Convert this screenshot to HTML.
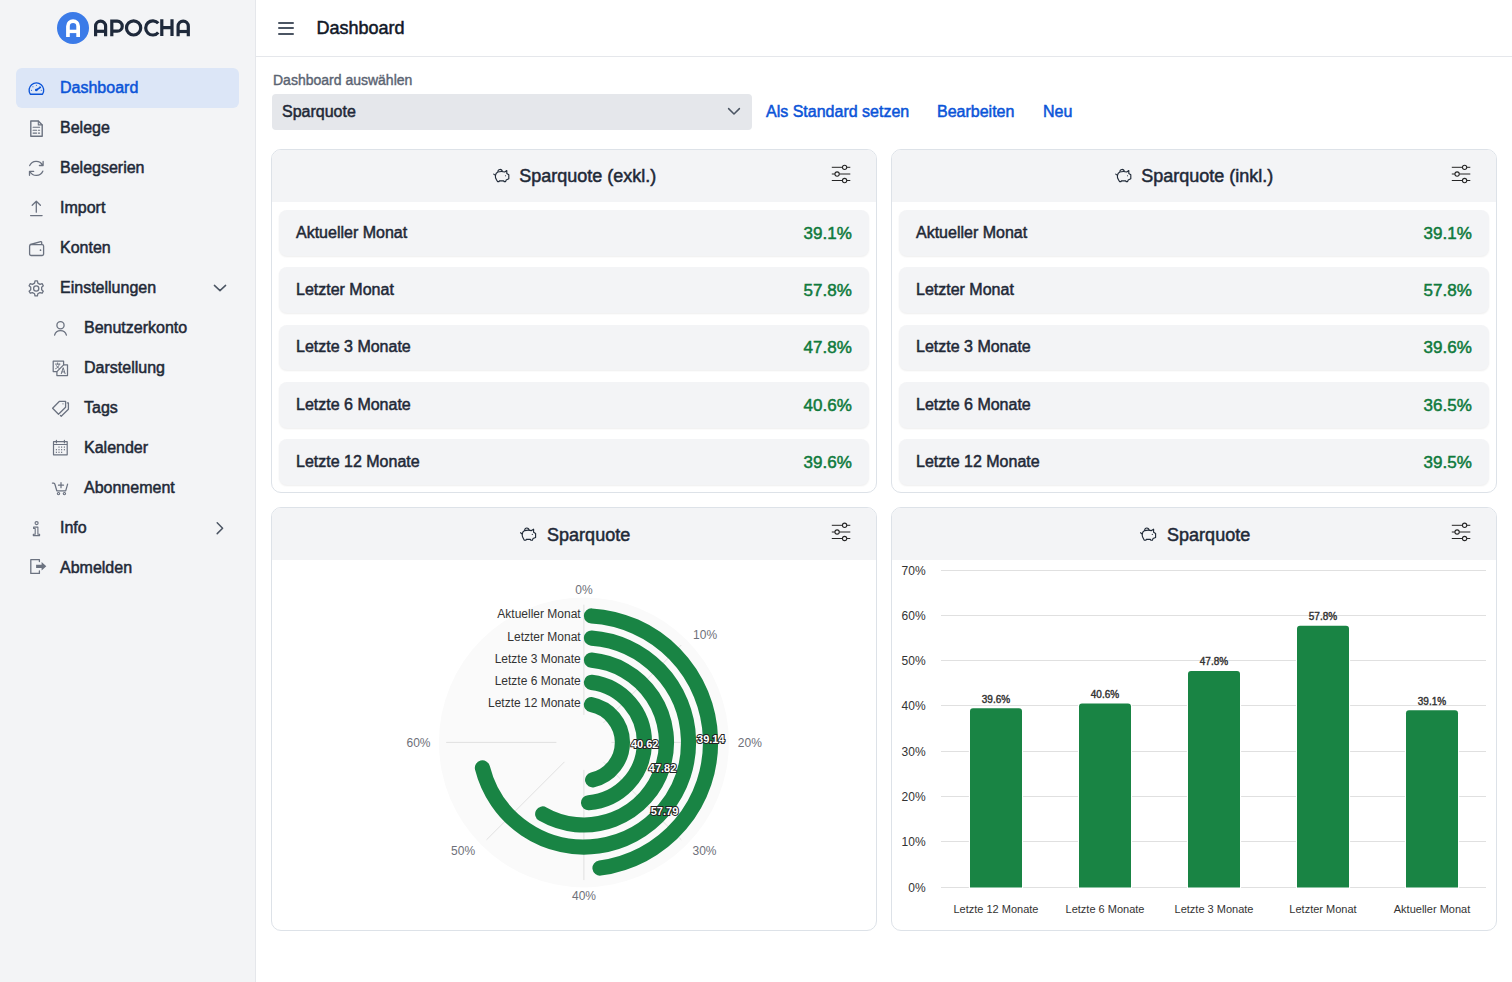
<!DOCTYPE html><html><head><meta charset="utf-8"><title>Dashboard</title><style>
*{box-sizing:border-box;margin:0;padding:0}
html,body{width:1512px;height:982px;overflow:hidden;background:#fff;font-family:"Liberation Sans",sans-serif}
.t{position:absolute;white-space:nowrap}
.abs{position:absolute}
svg.full{position:absolute;left:0;top:0;overflow:visible}
</style></head><body>
<div class="abs" style="left:0;top:0;width:255px;height:982px;background:#f3f4f6"></div>
<div class="abs" style="left:255px;top:0;width:1px;height:982px;background:#e5e7eb"></div>
<div class="abs" style="left:16px;top:68px;width:223px;height:40px;border-radius:6px;background:#dce6f7"></div>
<div class="abs" style="left:256px;top:56px;width:1256px;height:1px;background:#e5e7eb"></div>
<div class="abs" style="left:278px;top:21.8px;width:16px;height:2px;border-radius:1px;background:#4b5563"></div><div class="abs" style="left:278px;top:27.3px;width:16px;height:2px;border-radius:1px;background:#4b5563"></div><div class="abs" style="left:278px;top:32.8px;width:16px;height:2px;border-radius:1px;background:#4b5563"></div><div class="abs" style="left:272px;top:94px;width:480px;height:36px;border-radius:4px;background:#e5e7eb"></div>
<div class="abs" style="left:271px;top:149px;width:606px;height:344px;border:1px solid #dde2e8;border-radius:10px;overflow:hidden;background:#fff"><div class="abs" style="left:0;top:0;width:604px;height:52px;background:#f3f4f6"></div></div>
<div class="abs" style="left:279px;top:210.00px;width:590px;height:45.5px;border-radius:8px;background:#f3f4f6;box-shadow:0 1px 2px rgba(0,0,0,0.07)"></div>
<div class="abs" style="left:279px;top:267.00px;width:590px;height:45.5px;border-radius:8px;background:#f3f4f6;box-shadow:0 1px 2px rgba(0,0,0,0.07)"></div>
<div class="abs" style="left:279px;top:324.50px;width:590px;height:45.5px;border-radius:8px;background:#f3f4f6;box-shadow:0 1px 2px rgba(0,0,0,0.07)"></div>
<div class="abs" style="left:279px;top:382.00px;width:590px;height:45.5px;border-radius:8px;background:#f3f4f6;box-shadow:0 1px 2px rgba(0,0,0,0.07)"></div>
<div class="abs" style="left:279px;top:439.00px;width:590px;height:45.5px;border-radius:8px;background:#f3f4f6;box-shadow:0 1px 2px rgba(0,0,0,0.07)"></div>
<div class="abs" style="left:891px;top:149px;width:606px;height:344px;border:1px solid #dde2e8;border-radius:10px;overflow:hidden;background:#fff"><div class="abs" style="left:0;top:0;width:604px;height:52px;background:#f3f4f6"></div></div>
<div class="abs" style="left:899px;top:210.00px;width:590px;height:45.5px;border-radius:8px;background:#f3f4f6;box-shadow:0 1px 2px rgba(0,0,0,0.07)"></div>
<div class="abs" style="left:899px;top:267.00px;width:590px;height:45.5px;border-radius:8px;background:#f3f4f6;box-shadow:0 1px 2px rgba(0,0,0,0.07)"></div>
<div class="abs" style="left:899px;top:324.50px;width:590px;height:45.5px;border-radius:8px;background:#f3f4f6;box-shadow:0 1px 2px rgba(0,0,0,0.07)"></div>
<div class="abs" style="left:899px;top:382.00px;width:590px;height:45.5px;border-radius:8px;background:#f3f4f6;box-shadow:0 1px 2px rgba(0,0,0,0.07)"></div>
<div class="abs" style="left:899px;top:439.00px;width:590px;height:45.5px;border-radius:8px;background:#f3f4f6;box-shadow:0 1px 2px rgba(0,0,0,0.07)"></div>
<div class="abs" style="left:271px;top:507px;width:606px;height:424px;border:1px solid #dde2e8;border-radius:10px;overflow:hidden;background:#fff"><div class="abs" style="left:0;top:0;width:604px;height:52px;background:#f3f4f6"></div></div>
<div class="abs" style="left:891px;top:507px;width:606px;height:424px;border:1px solid #dde2e8;border-radius:10px;overflow:hidden;background:#fff"><div class="abs" style="left:0;top:0;width:604px;height:52px;background:#f3f4f6"></div></div>
<svg class="full" width="1512" height="982" viewBox="0 0 1512 982"><circle cx="73" cy="28" r="16" fill="#3b7be8"/><path d="M67.95 36.9 V26.25 a5.1 5.1 0 0 1 10.2 0 V36.9" fill="none" stroke="#fff" stroke-width="3.7"/><path d="M67.95 31.4 H78.15" stroke="#fff" stroke-width="3.4"/><path d="M95.60 36.2 V26.10 a5.00 5.00 0 0 1 10.00 0 V36.2" fill="none" stroke="#1e293b" stroke-width="3.2"/><path d="M95.60 31.3 H105.60" stroke="#1e293b" stroke-width="3.2"/><path d="M111.80 36.2 V21.10 H117.2 a5.05 5.05 0 0 1 0 10.10 H111.80" fill="none" stroke="#1e293b" stroke-width="3.2"/><circle cx="133.6" cy="27.9" r="7.10" fill="none" stroke="#1e293b" stroke-width="3.2"/><path d="M158.24 23.34 A7.10 7.10 0 1 0 158.24 32.46" fill="none" stroke="#1e293b" stroke-width="3.2"/><path d="M161.80 19.2 V36 M172.00 19.2 V36 M161.80 27.65 H172.00" fill="none" stroke="#1e293b" stroke-width="3.2"/><path d="M178.10 36.2 V26.20 a5.10 5.10 0 0 1 10.20 0 V36.2" fill="none" stroke="#1e293b" stroke-width="3.2"/><path d="M178.10 31.5 H188.30" stroke="#1e293b" stroke-width="3.2"/><path d="M30.3 94.2 A7.3 7.3 0 1 1 42.5 94.2 Z" fill="none" stroke="#0b54d8" stroke-width="1.35" stroke-linecap="round" stroke-linejoin="round" /><path d="M36.3 90 L40.4 87.3" fill="none" stroke="#0b54d8" stroke-width="1.5" stroke-linecap="round" stroke-linejoin="round" /><circle cx="36.3" cy="90" r="1.3" fill="#0b54d8"/><circle cx="31.50" cy="90.20" r="0.55" fill="#0b54d8"/><circle cx="32.94" cy="86.74" r="0.55" fill="#0b54d8"/><circle cx="36.40" cy="85.30" r="0.55" fill="#0b54d8"/><circle cx="39.86" cy="86.74" r="0.55" fill="#0b54d8"/><circle cx="41.30" cy="90.20" r="0.55" fill="#0b54d8"/><path d="M30.8 121 H38.3 L42.2 124.9 V136.2 H30.8 Z" fill="none" stroke="#6b7280" stroke-width="1.4" stroke-linecap="round" stroke-linejoin="round" /><path d="M38.3 121 V124.9 H42.2" fill="none" stroke="#6b7280" stroke-width="1.1" stroke-linecap="round" stroke-linejoin="round" /><path d="M33.1 127.3 H39.6 M33.1 130.2 H36.6 M38.4 130.2 H39.6 M33.1 133.1 H36.6 M38.4 133.1 H39.6" fill="none" stroke="#6b7280" stroke-width="1.1" stroke-linecap="round" stroke-linejoin="round" /><path d="M29.7 165.6 A7.1 7.1 0 0 1 42.5 165.2 M43.1 161.5 V165.5 H39.4" fill="none" stroke="#6b7280" stroke-width="1.3" stroke-linecap="round" stroke-linejoin="round" /><path d="M42.8 171.2 A7.1 7.1 0 0 1 30.1 171.7 M29.5 175.3 V171.3 H33.7" fill="none" stroke="#6b7280" stroke-width="1.3" stroke-linecap="round" stroke-linejoin="round" /><path d="M36.3 201.2 V212.2 M32.2 205.3 L36.3 201.2 L40.4 205.3 M30.6 215.6 H42.1" fill="none" stroke="#6b7280" stroke-width="1.3" stroke-linecap="round" stroke-linejoin="round" /><path d="M29.6 246 a1.4 1.4 0 0 1 1.4 -1.4 H42.2 a1.4 1.4 0 0 1 1.4 1.4 V254.1 a1.4 1.4 0 0 1 -1.4 1.4 H31 a1.4 1.4 0 0 1 -1.4 -1.4 Z" fill="none" stroke="#6b7280" stroke-width="1.3" stroke-linecap="round" stroke-linejoin="round" /><path d="M30.4 244.5 L40.7 241.6 a0.8 0.8 0 0 1 1 0.8 V244.4" fill="none" stroke="#6b7280" stroke-width="1.3" stroke-linecap="round" stroke-linejoin="round" /><circle cx="40.5" cy="250.2" r="0.85" fill="#6b7280"/><path d="M34.56 283.09 L35.01 280.94 L37.39 280.94 L37.84 283.09 L40.02 284.35 L42.11 283.67 L43.30 285.73 L41.66 287.19 L41.66 289.71 L43.30 291.17 L42.11 293.23 L40.02 292.55 L37.84 293.81 L37.39 295.96 L35.01 295.96 L34.56 293.81 L32.38 292.55 L30.29 293.23 L29.10 291.17 L30.74 289.71 L30.74 287.19 L29.10 285.73 L30.29 283.67 L32.38 284.35 Z" fill="none" stroke="#6b7280" stroke-width="1.3" stroke-linecap="round" stroke-linejoin="round" /><circle cx="36.2" cy="288.45" r="2.6" fill="none" stroke="#6b7280" stroke-width="1.3"/><circle cx="60.5" cy="325.3" r="3.6" fill="none" stroke="#6b7280" stroke-width="1.3"/><path d="M54.6 335.2 A6.1 6.1 0 0 1 66.4 335.2" fill="none" stroke="#6b7280" stroke-width="1.3" stroke-linecap="round" stroke-linejoin="round" /><path d="M53.2 361.2 H63.6 V364.9 L56.9 371.6 H53.2 Z" fill="none" stroke="#6b7280" stroke-width="1.25" stroke-linecap="round" stroke-linejoin="round" /><path d="M63.6 364.8 H67.5 V375.5 H56.9 V371.6" fill="none" stroke="#6b7280" stroke-width="1.25" stroke-linecap="round" stroke-linejoin="round" /><path d="M55.4 364.1 H60 M57.6 362.9 V364.1 M59.3 364.1 C58.9 366.4 57.6 367.9 55.6 368.7 M56.5 365.7 C57.1 366.9 58 367.9 59.2 368.5" fill="none" stroke="#6b7280" stroke-width="0.95" stroke-linecap="round" stroke-linejoin="round" /><path d="M61.3 373.7 L63.2 367.7 L65.1 373.7 M61.9 371.9 H64.5" fill="none" stroke="#6b7280" stroke-width="1.0" stroke-linecap="round" stroke-linejoin="round" /><path d="M52.6 408.3 L59.5 401.3 H65.6 V407.3 L58.5 414.2 Z" fill="none" stroke="#6b7280" stroke-width="1.3" stroke-linecap="round" stroke-linejoin="round" /><path d="M67.3 402.9 H68.4 V409.2 L61.2 416.2 L60.4 415.4" fill="none" stroke="#6b7280" stroke-width="1.3" stroke-linecap="round" stroke-linejoin="round" /><circle cx="63" cy="403.8" r="0.65" fill="#6b7280"/><path d="M53.5 441.7 H67.2 V454.8 H53.5 Z M53.5 444.5 H67.2 M56.4 440.3 V442.8 M64.4 440.3 V442.8" fill="none" stroke="#6b7280" stroke-width="1.2" stroke-linecap="round" stroke-linejoin="round" /><rect x="58.40" y="446.50" width="1.2" height="1.2" fill="#6b7280"/><rect x="61.00" y="446.50" width="1.2" height="1.2" fill="#6b7280"/><rect x="63.80" y="446.50" width="1.2" height="1.2" fill="#6b7280"/><rect x="55.80" y="449.10" width="1.2" height="1.2" fill="#6b7280"/><rect x="58.40" y="449.10" width="1.2" height="1.2" fill="#6b7280"/><rect x="61.00" y="449.10" width="1.2" height="1.2" fill="#6b7280"/><rect x="63.80" y="449.10" width="1.2" height="1.2" fill="#6b7280"/><rect x="55.80" y="451.70" width="1.2" height="1.2" fill="#6b7280"/><rect x="58.40" y="451.70" width="1.2" height="1.2" fill="#6b7280"/><rect x="61.00" y="451.70" width="1.2" height="1.2" fill="#6b7280"/><path d="M52.4 483.1 H53.7 Q54.6 483.3 54.9 484.3 L56.8 490.8 H65.7 L67.6 484.2" fill="none" stroke="#6b7280" stroke-width="1.25" stroke-linecap="round" stroke-linejoin="round" /><path d="M61 482.7 V487.7 M58.5 485.2 H63.5" fill="none" stroke="#6b7280" stroke-width="1.25" stroke-linecap="round" stroke-linejoin="round" /><circle cx="58.5" cy="493.6" r="1.15" fill="none" stroke="#6b7280" stroke-width="1.15"/><circle cx="64.4" cy="493.6" r="1.15" fill="none" stroke="#6b7280" stroke-width="1.15"/><circle cx="36.6" cy="523.1" r="1.55" fill="none" stroke="#6b7280" stroke-width="1.15"/><path d="M33.6 527.1 H37.9 V534.2 H39.6 V535.6 H33.3 V534.2 H35.2 V528.5 H33.6 Z" fill="none" stroke="#6b7280" stroke-width="1.1" stroke-linecap="round" stroke-linejoin="round" /><path d="M39.4 561.6 V559.7 H30.8 V573.4 H39.4 V571" fill="none" stroke="#6b7280" stroke-width="1.3" stroke-linecap="round" stroke-linejoin="round" /><path d="M36.1 564.7 H41.6 V562 L46.3 566.3 L41.6 570.4 V568 H36.1 Z" fill="#6b7280"/><path d="M214.4 285.4 L220 290.6 L225.6 285.4" fill="none" stroke="#4b5563" stroke-width="1.5" stroke-linecap="round" stroke-linejoin="round" /><path d="M217.2 522.8 L222.6 528.2 L217.2 533.6" fill="none" stroke="#4b5563" stroke-width="1.5" stroke-linecap="round" stroke-linejoin="round" /><path d="M728.6 108.6 L734 114 L739.4 108.6" fill="none" stroke="#4b5563" stroke-width="1.5" stroke-linecap="round" stroke-linejoin="round" /><g transform="translate(489.2 163.4)"><path d="M8.6 8.6 C10.5 8.1 13.5 8.0 15.5 8.6 L17.6 7.2 L17.6 10.2 L19.6 11.4 L19.6 15.4 L17.0 16.6 L16.4 18.2 L14.8 18.2 L14.5 17.4 L10.2 17.4 L9.9 18.2 L8.3 18.2 L7.0 15.8 C6.3 14.8 6.1 13.5 6.2 12.2 C6.5 10.3 7.5 9.2 8.6 8.6 Z" fill="none" stroke="#1f2937" stroke-width="1.15" stroke-linejoin="round"/><path d="M6.3 12.0 L4.5 10.7" fill="none" stroke="#1f2937" stroke-width="1.1" stroke-linecap="round"/><path d="M8.7 8.4 C8.5 5.3 12.8 5.3 13.1 8.2" fill="none" stroke="#1f2937" stroke-width="1.15"/><circle cx="16.3" cy="12.4" r="0.55" fill="#1f2937"/></g><path d="M831.8 167.3 H842.5 M846.7 167.3 H850.3" stroke="#262626" stroke-width="1"/><circle cx="844.6" cy="167.3" r="2.15" fill="none" stroke="#262626" stroke-width="1.05"/><path d="M831.8 174.0 H835.0 M839.2 174.0 H850.3" stroke="#262626" stroke-width="1"/><circle cx="837.1" cy="174.0" r="2.15" fill="none" stroke="#262626" stroke-width="1.05"/><path d="M831.8 180.5 H842.5 M846.7 180.5 H850.3" stroke="#262626" stroke-width="1"/><circle cx="844.6" cy="180.5" r="2.15" fill="none" stroke="#262626" stroke-width="1.05"/><g transform="translate(1111.2 163.4)"><path d="M8.6 8.6 C10.5 8.1 13.5 8.0 15.5 8.6 L17.6 7.2 L17.6 10.2 L19.6 11.4 L19.6 15.4 L17.0 16.6 L16.4 18.2 L14.8 18.2 L14.5 17.4 L10.2 17.4 L9.9 18.2 L8.3 18.2 L7.0 15.8 C6.3 14.8 6.1 13.5 6.2 12.2 C6.5 10.3 7.5 9.2 8.6 8.6 Z" fill="none" stroke="#1f2937" stroke-width="1.15" stroke-linejoin="round"/><path d="M6.3 12.0 L4.5 10.7" fill="none" stroke="#1f2937" stroke-width="1.1" stroke-linecap="round"/><path d="M8.7 8.4 C8.5 5.3 12.8 5.3 13.1 8.2" fill="none" stroke="#1f2937" stroke-width="1.15"/><circle cx="16.3" cy="12.4" r="0.55" fill="#1f2937"/></g><path d="M1451.8 167.3 H1462.5 M1466.6999999999998 167.3 H1470.3" stroke="#262626" stroke-width="1"/><circle cx="1464.6" cy="167.3" r="2.15" fill="none" stroke="#262626" stroke-width="1.05"/><path d="M1451.8 174.0 H1455.0 M1459.1999999999998 174.0 H1470.3" stroke="#262626" stroke-width="1"/><circle cx="1457.1" cy="174.0" r="2.15" fill="none" stroke="#262626" stroke-width="1.05"/><path d="M1451.8 180.5 H1462.5 M1466.6999999999998 180.5 H1470.3" stroke="#262626" stroke-width="1"/><circle cx="1464.6" cy="180.5" r="2.15" fill="none" stroke="#262626" stroke-width="1.05"/><g transform="translate(516 522)"><path d="M8.6 8.6 C10.5 8.1 13.5 8.0 15.5 8.6 L17.6 7.2 L17.6 10.2 L19.6 11.4 L19.6 15.4 L17.0 16.6 L16.4 18.2 L14.8 18.2 L14.5 17.4 L10.2 17.4 L9.9 18.2 L8.3 18.2 L7.0 15.8 C6.3 14.8 6.1 13.5 6.2 12.2 C6.5 10.3 7.5 9.2 8.6 8.6 Z" fill="none" stroke="#1f2937" stroke-width="1.15" stroke-linejoin="round"/><path d="M6.3 12.0 L4.5 10.7" fill="none" stroke="#1f2937" stroke-width="1.1" stroke-linecap="round"/><path d="M8.7 8.4 C8.5 5.3 12.8 5.3 13.1 8.2" fill="none" stroke="#1f2937" stroke-width="1.15"/><circle cx="16.3" cy="12.4" r="0.55" fill="#1f2937"/></g><g transform="translate(1136 522)"><path d="M8.6 8.6 C10.5 8.1 13.5 8.0 15.5 8.6 L17.6 7.2 L17.6 10.2 L19.6 11.4 L19.6 15.4 L17.0 16.6 L16.4 18.2 L14.8 18.2 L14.5 17.4 L10.2 17.4 L9.9 18.2 L8.3 18.2 L7.0 15.8 C6.3 14.8 6.1 13.5 6.2 12.2 C6.5 10.3 7.5 9.2 8.6 8.6 Z" fill="none" stroke="#1f2937" stroke-width="1.15" stroke-linejoin="round"/><path d="M6.3 12.0 L4.5 10.7" fill="none" stroke="#1f2937" stroke-width="1.1" stroke-linecap="round"/><path d="M8.7 8.4 C8.5 5.3 12.8 5.3 13.1 8.2" fill="none" stroke="#1f2937" stroke-width="1.15"/><circle cx="16.3" cy="12.4" r="0.55" fill="#1f2937"/></g><path d="M831.8 525.3 H842.5 M846.7 525.3 H850.3" stroke="#262626" stroke-width="1"/><circle cx="844.6" cy="525.3" r="2.15" fill="none" stroke="#262626" stroke-width="1.05"/><path d="M831.8 532.0 H835.0 M839.2 532.0 H850.3" stroke="#262626" stroke-width="1"/><circle cx="837.1" cy="532.0" r="2.15" fill="none" stroke="#262626" stroke-width="1.05"/><path d="M831.8 538.5 H842.5 M846.7 538.5 H850.3" stroke="#262626" stroke-width="1"/><circle cx="844.6" cy="538.5" r="2.15" fill="none" stroke="#262626" stroke-width="1.05"/><path d="M1451.8 525.3 H1462.5 M1466.6999999999998 525.3 H1470.3" stroke="#262626" stroke-width="1"/><circle cx="1464.6" cy="525.3" r="2.15" fill="none" stroke="#262626" stroke-width="1.05"/><path d="M1451.8 532.0 H1455.0 M1459.1999999999998 532.0 H1470.3" stroke="#262626" stroke-width="1"/><circle cx="1457.1" cy="532.0" r="2.15" fill="none" stroke="#262626" stroke-width="1.05"/><path d="M1451.8 538.5 H1462.5 M1466.6999999999998 538.5 H1470.3" stroke="#262626" stroke-width="1"/><circle cx="1464.6" cy="538.5" r="2.15" fill="none" stroke="#262626" stroke-width="1.05"/><circle cx="583.9" cy="742.4" r="145" fill="#fafafa"/><path d="M583.90 714.90 L583.90 604.70" stroke="#e0e0e0" stroke-width="1"/><path d="M603.35 722.95 L681.27 645.03" stroke="#e0e0e0" stroke-width="1"/><path d="M611.40 742.40 L721.60 742.40" stroke="#e0e0e0" stroke-width="1"/><path d="M603.35 761.85 L681.27 839.77" stroke="#e0e0e0" stroke-width="1"/><path d="M583.90 769.90 L583.90 880.10" stroke="#e0e0e0" stroke-width="1"/><path d="M564.45 761.85 L486.53 839.77" stroke="#e0e0e0" stroke-width="1"/><path d="M556.40 742.40 L446.20 742.40" stroke="#e0e0e0" stroke-width="1"/><path d="M591.45 704.65 A38.50 38.50 0 0 1 592.63 779.90" fill="none" stroke="#198444" stroke-width="15.2" stroke-linecap="round"/><path d="M591.48 682.34 A60.54 60.54 0 0 1 588.55 802.76" fill="none" stroke="#198444" stroke-width="15.2" stroke-linecap="round"/><path d="M591.49 660.17 A82.58 82.58 0 1 1 542.71 813.98" fill="none" stroke="#198444" stroke-width="15.2" stroke-linecap="round"/><path d="M591.49 638.06 A104.62 104.62 0 1 1 482.44 767.90" fill="none" stroke="#198444" stroke-width="15.2" stroke-linecap="round"/><path d="M591.50 615.97 A126.66 126.66 0 0 1 600.01 868.03" fill="none" stroke="#198444" stroke-width="15.2" stroke-linecap="round"/><path d="M941 570.5 H1486" stroke="#e0e0e0" stroke-width="1"/><path d="M941 615.5 H1486" stroke="#e0e0e0" stroke-width="1"/><path d="M941 660.5 H1486" stroke="#e0e0e0" stroke-width="1"/><path d="M941 705.5 H1486" stroke="#e0e0e0" stroke-width="1"/><path d="M941 751.5 H1486" stroke="#e0e0e0" stroke-width="1"/><path d="M941 796.5 H1486" stroke="#e0e0e0" stroke-width="1"/><path d="M941 841.5 H1486" stroke="#e0e0e0" stroke-width="1"/><path d="M941 887.5 H1486" stroke="#e0e0e0" stroke-width="1"/><path d="M970 887.5 V711.1685714285715 a3 3 0 0 1 3 -3 H1019 a3 3 0 0 1 3 3 V887.5 Z" fill="#198444" stroke="#fff" stroke-width="2.2" paint-order="stroke"/><path d="M1079 887.5 V706.5494285714285 a3 3 0 0 1 3 -3 H1128 a3 3 0 0 1 3 3 V887.5 Z" fill="#198444" stroke="#fff" stroke-width="2.2" paint-order="stroke"/><path d="M1188 887.5 V673.9437142857143 a3 3 0 0 1 3 -3 H1237 a3 3 0 0 1 3 3 V887.5 Z" fill="#198444" stroke="#fff" stroke-width="2.2" paint-order="stroke"/><path d="M1297 887.5 V628.7938571428572 a3 3 0 0 1 3 -3 H1346 a3 3 0 0 1 3 3 V887.5 Z" fill="#198444" stroke="#fff" stroke-width="2.2" paint-order="stroke"/><path d="M1406 887.5 V713.2517142857143 a3 3 0 0 1 3 -3 H1455 a3 3 0 0 1 3 3 V887.5 Z" fill="#198444" stroke="#fff" stroke-width="2.2" paint-order="stroke"/></svg>
<div class="t" style="left:60px;top:80.26px;font-size:16px;line-height:16px;font-weight:400;color:#0b54d8;-webkit-text-stroke:0.5px #0b54d8;">Dashboard</div>
<div class="t" style="left:60px;top:120.26px;font-size:16px;line-height:16px;font-weight:400;color:#1f2937;-webkit-text-stroke:0.5px #1f2937;">Belege</div>
<div class="t" style="left:60px;top:160.26px;font-size:16px;line-height:16px;font-weight:400;color:#1f2937;-webkit-text-stroke:0.5px #1f2937;">Belegserien</div>
<div class="t" style="left:60px;top:200.26px;font-size:16px;line-height:16px;font-weight:400;color:#1f2937;-webkit-text-stroke:0.5px #1f2937;">Import</div>
<div class="t" style="left:60px;top:240.26px;font-size:16px;line-height:16px;font-weight:400;color:#1f2937;-webkit-text-stroke:0.5px #1f2937;">Konten</div>
<div class="t" style="left:60px;top:280.26px;font-size:16px;line-height:16px;font-weight:400;color:#1f2937;-webkit-text-stroke:0.5px #1f2937;">Einstellungen</div>
<div class="t" style="left:84px;top:320.26px;font-size:16px;line-height:16px;font-weight:400;color:#1f2937;-webkit-text-stroke:0.5px #1f2937;">Benutzerkonto</div>
<div class="t" style="left:84px;top:360.26px;font-size:16px;line-height:16px;font-weight:400;color:#1f2937;-webkit-text-stroke:0.5px #1f2937;">Darstellung</div>
<div class="t" style="left:84px;top:400.26px;font-size:16px;line-height:16px;font-weight:400;color:#1f2937;-webkit-text-stroke:0.5px #1f2937;">Tags</div>
<div class="t" style="left:84px;top:440.26px;font-size:16px;line-height:16px;font-weight:400;color:#1f2937;-webkit-text-stroke:0.5px #1f2937;">Kalender</div>
<div class="t" style="left:84px;top:480.26px;font-size:16px;line-height:16px;font-weight:400;color:#1f2937;-webkit-text-stroke:0.5px #1f2937;">Abonnement</div>
<div class="t" style="left:60px;top:520.26px;font-size:16px;line-height:16px;font-weight:400;color:#1f2937;-webkit-text-stroke:0.5px #1f2937;">Info</div>
<div class="t" style="left:60px;top:560.26px;font-size:16px;line-height:16px;font-weight:400;color:#1f2937;-webkit-text-stroke:0.5px #1f2937;">Abmelden</div>
<div class="t" style="left:316.4px;top:18.66px;font-size:18px;line-height:18px;font-weight:400;color:#111827;-webkit-text-stroke:0.5px #111827;">Dashboard</div>
<div class="t" style="left:273px;top:72.75px;font-size:14px;line-height:14px;font-weight:400;color:#5b6472;-webkit-text-stroke:0.4px #5b6472;">Dashboard auswählen</div>
<div class="t" style="left:282px;top:103.66px;font-size:16px;line-height:16px;font-weight:400;color:#1f2937;-webkit-text-stroke:0.5px #1f2937;">Sparquote</div>
<div class="t" style="left:766px;top:104.36px;font-size:16px;line-height:16px;font-weight:400;color:#0b54d8;-webkit-text-stroke:0.5px #0b54d8;">Als Standard setzen</div>
<div class="t" style="left:937px;top:104.36px;font-size:16px;line-height:16px;font-weight:400;color:#0b54d8;-webkit-text-stroke:0.5px #0b54d8;">Bearbeiten</div>
<div class="t" style="left:1043px;top:104.36px;font-size:16px;line-height:16px;font-weight:400;color:#0b54d8;-webkit-text-stroke:0.5px #0b54d8;">Neu</div>
<div class="t" style="left:296px;top:224.66px;font-size:16px;line-height:16px;font-weight:400;color:#1f2937;-webkit-text-stroke:0.5px #1f2937;">Aktueller Monat</div>
<div class="t" style="right:660.2px;top:224.61px;font-size:17px;line-height:17px;font-weight:400;color:#0f7a3c;-webkit-text-stroke:0.5px #0f7a3c;">39.1%</div>
<div class="t" style="left:296px;top:281.66px;font-size:16px;line-height:16px;font-weight:400;color:#1f2937;-webkit-text-stroke:0.5px #1f2937;">Letzter Monat</div>
<div class="t" style="right:660.2px;top:281.61px;font-size:17px;line-height:17px;font-weight:400;color:#0f7a3c;-webkit-text-stroke:0.5px #0f7a3c;">57.8%</div>
<div class="t" style="left:296px;top:339.16px;font-size:16px;line-height:16px;font-weight:400;color:#1f2937;-webkit-text-stroke:0.5px #1f2937;">Letzte 3 Monate</div>
<div class="t" style="right:660.2px;top:339.11px;font-size:17px;line-height:17px;font-weight:400;color:#0f7a3c;-webkit-text-stroke:0.5px #0f7a3c;">47.8%</div>
<div class="t" style="left:296px;top:396.66px;font-size:16px;line-height:16px;font-weight:400;color:#1f2937;-webkit-text-stroke:0.5px #1f2937;">Letzte 6 Monate</div>
<div class="t" style="right:660.2px;top:396.61px;font-size:17px;line-height:17px;font-weight:400;color:#0f7a3c;-webkit-text-stroke:0.5px #0f7a3c;">40.6%</div>
<div class="t" style="left:296px;top:453.66px;font-size:16px;line-height:16px;font-weight:400;color:#1f2937;-webkit-text-stroke:0.5px #1f2937;">Letzte 12 Monate</div>
<div class="t" style="right:660.2px;top:453.61px;font-size:17px;line-height:17px;font-weight:400;color:#0f7a3c;-webkit-text-stroke:0.5px #0f7a3c;">39.6%</div>
<div class="t" style="left:519.3px;top:166.96px;font-size:18px;line-height:18px;font-weight:400;color:#1f2937;-webkit-text-stroke:0.5px #1f2937;">Sparquote (exkl.)</div>
<div class="t" style="left:916px;top:224.66px;font-size:16px;line-height:16px;font-weight:400;color:#1f2937;-webkit-text-stroke:0.5px #1f2937;">Aktueller Monat</div>
<div class="t" style="right:40.200000000000045px;top:224.61px;font-size:17px;line-height:17px;font-weight:400;color:#0f7a3c;-webkit-text-stroke:0.5px #0f7a3c;">39.1%</div>
<div class="t" style="left:916px;top:281.66px;font-size:16px;line-height:16px;font-weight:400;color:#1f2937;-webkit-text-stroke:0.5px #1f2937;">Letzter Monat</div>
<div class="t" style="right:40.200000000000045px;top:281.61px;font-size:17px;line-height:17px;font-weight:400;color:#0f7a3c;-webkit-text-stroke:0.5px #0f7a3c;">57.8%</div>
<div class="t" style="left:916px;top:339.16px;font-size:16px;line-height:16px;font-weight:400;color:#1f2937;-webkit-text-stroke:0.5px #1f2937;">Letzte 3 Monate</div>
<div class="t" style="right:40.200000000000045px;top:339.11px;font-size:17px;line-height:17px;font-weight:400;color:#0f7a3c;-webkit-text-stroke:0.5px #0f7a3c;">39.6%</div>
<div class="t" style="left:916px;top:396.66px;font-size:16px;line-height:16px;font-weight:400;color:#1f2937;-webkit-text-stroke:0.5px #1f2937;">Letzte 6 Monate</div>
<div class="t" style="right:40.200000000000045px;top:396.61px;font-size:17px;line-height:17px;font-weight:400;color:#0f7a3c;-webkit-text-stroke:0.5px #0f7a3c;">36.5%</div>
<div class="t" style="left:916px;top:453.66px;font-size:16px;line-height:16px;font-weight:400;color:#1f2937;-webkit-text-stroke:0.5px #1f2937;">Letzte 12 Monate</div>
<div class="t" style="right:40.200000000000045px;top:453.61px;font-size:17px;line-height:17px;font-weight:400;color:#0f7a3c;-webkit-text-stroke:0.5px #0f7a3c;">39.5%</div>
<div class="t" style="left:1141.3px;top:166.96px;font-size:18px;line-height:18px;font-weight:400;color:#1f2937;-webkit-text-stroke:0.5px #1f2937;">Sparquote (inkl.)</div>
<div class="t" style="left:547.1px;top:526.26px;font-size:18px;line-height:18px;font-weight:400;color:#1f2937;-webkit-text-stroke:0.5px #1f2937;">Sparquote</div>
<div class="t" style="left:1167.1px;top:526.26px;font-size:18px;line-height:18px;font-weight:400;color:#1f2937;-webkit-text-stroke:0.5px #1f2937;">Sparquote</div>
<div class="t" style="left:284px;width:600px;text-align:center;top:584.12px;font-size:12px;line-height:12px;font-weight:400;color:#6e7079;">0%</div>
<div class="t" style="left:693.1px;top:629.07px;font-size:12px;line-height:12px;font-weight:400;color:#6e7079;">10%</div>
<div class="t" style="left:737.8px;top:736.87px;font-size:12px;line-height:12px;font-weight:400;color:#6e7079;">20%</div>
<div class="t" style="left:692.5px;top:844.62px;font-size:12px;line-height:12px;font-weight:400;color:#6e7079;">30%</div>
<div class="t" style="left:284px;width:600px;text-align:center;top:890.12px;font-size:12px;line-height:12px;font-weight:400;color:#6e7079;">40%</div>
<div class="t" style="right:1036.9px;top:844.62px;font-size:12px;line-height:12px;font-weight:400;color:#6e7079;">50%</div>
<div class="t" style="right:1081.5px;top:736.77px;font-size:12px;line-height:12px;font-weight:400;color:#6e7079;">60%</div>
<div class="t" style="right:931.3px;top:607.52px;font-size:12px;line-height:12px;font-weight:400;color:#333333;">Aktueller Monat</div>
<div class="t" style="right:931.3px;top:630.52px;font-size:12px;line-height:12px;font-weight:400;color:#333333;">Letzter Monat</div>
<div class="t" style="right:931.3px;top:652.82px;font-size:12px;line-height:12px;font-weight:400;color:#333333;">Letzte 3 Monate</div>
<div class="t" style="right:931.3px;top:675.12px;font-size:12px;line-height:12px;font-weight:400;color:#333333;">Letzte 6 Monate</div>
<div class="t" style="right:931.3px;top:696.82px;font-size:12px;line-height:12px;font-weight:400;color:#333333;">Letzte 12 Monate</div>
<div class="t" style="left:344.70000000000005px;width:600px;text-align:center;top:738.50px;font-size:11px;line-height:11px;font-weight:700;color:#ffffff;-webkit-text-stroke:2px #222;paint-order:stroke fill;">40.62</div>
<div class="t" style="left:362.6px;width:600px;text-align:center;top:762.90px;font-size:11px;line-height:11px;font-weight:700;color:#ffffff;-webkit-text-stroke:2px #222;paint-order:stroke fill;">47.82</div>
<div class="t" style="left:364.5px;width:600px;text-align:center;top:806.00px;font-size:11px;line-height:11px;font-weight:700;color:#ffffff;-webkit-text-stroke:2px #222;paint-order:stroke fill;">57.79</div>
<div class="t" style="left:410.79999999999995px;width:600px;text-align:center;top:733.70px;font-size:11px;line-height:11px;font-weight:700;color:#ffffff;-webkit-text-stroke:2px #222;paint-order:stroke fill;">39.14</div>
<div class="t" style="right:586.4px;top:564.52px;font-size:12px;line-height:12px;font-weight:400;color:#333333;">70%</div>
<div class="t" style="right:586.4px;top:609.52px;font-size:12px;line-height:12px;font-weight:400;color:#333333;">60%</div>
<div class="t" style="right:586.4px;top:654.52px;font-size:12px;line-height:12px;font-weight:400;color:#333333;">50%</div>
<div class="t" style="right:586.4px;top:699.52px;font-size:12px;line-height:12px;font-weight:400;color:#333333;">40%</div>
<div class="t" style="right:586.4px;top:745.52px;font-size:12px;line-height:12px;font-weight:400;color:#333333;">30%</div>
<div class="t" style="right:586.4px;top:790.52px;font-size:12px;line-height:12px;font-weight:400;color:#333333;">20%</div>
<div class="t" style="right:586.4px;top:835.52px;font-size:12px;line-height:12px;font-weight:400;color:#333333;">10%</div>
<div class="t" style="right:586.4px;top:881.52px;font-size:12px;line-height:12px;font-weight:400;color:#333333;">0%</div>
<div class="t" style="left:696px;width:600px;text-align:center;top:694.55px;font-size:10px;line-height:10px;font-weight:400;color:#333333;-webkit-text-stroke:0.4px #333333;">39.6%</div>
<div class="t" style="left:696px;width:600px;text-align:center;top:903.70px;font-size:11px;line-height:11px;font-weight:400;color:#333333;">Letzte 12 Monate</div>
<div class="t" style="left:805px;width:600px;text-align:center;top:689.93px;font-size:10px;line-height:10px;font-weight:400;color:#333333;-webkit-text-stroke:0.4px #333333;">40.6%</div>
<div class="t" style="left:805px;width:600px;text-align:center;top:903.70px;font-size:11px;line-height:11px;font-weight:400;color:#333333;">Letzte 6 Monate</div>
<div class="t" style="left:914px;width:600px;text-align:center;top:657.32px;font-size:10px;line-height:10px;font-weight:400;color:#333333;-webkit-text-stroke:0.4px #333333;">47.8%</div>
<div class="t" style="left:914px;width:600px;text-align:center;top:903.70px;font-size:11px;line-height:11px;font-weight:400;color:#333333;">Letzte 3 Monate</div>
<div class="t" style="left:1023px;width:600px;text-align:center;top:612.17px;font-size:10px;line-height:10px;font-weight:400;color:#333333;-webkit-text-stroke:0.4px #333333;">57.8%</div>
<div class="t" style="left:1023px;width:600px;text-align:center;top:903.70px;font-size:11px;line-height:11px;font-weight:400;color:#333333;">Letzter Monat</div>
<div class="t" style="left:1132px;width:600px;text-align:center;top:696.63px;font-size:10px;line-height:10px;font-weight:400;color:#333333;-webkit-text-stroke:0.4px #333333;">39.1%</div>
<div class="t" style="left:1132px;width:600px;text-align:center;top:903.70px;font-size:11px;line-height:11px;font-weight:400;color:#333333;">Aktueller Monat</div>
</body></html>
